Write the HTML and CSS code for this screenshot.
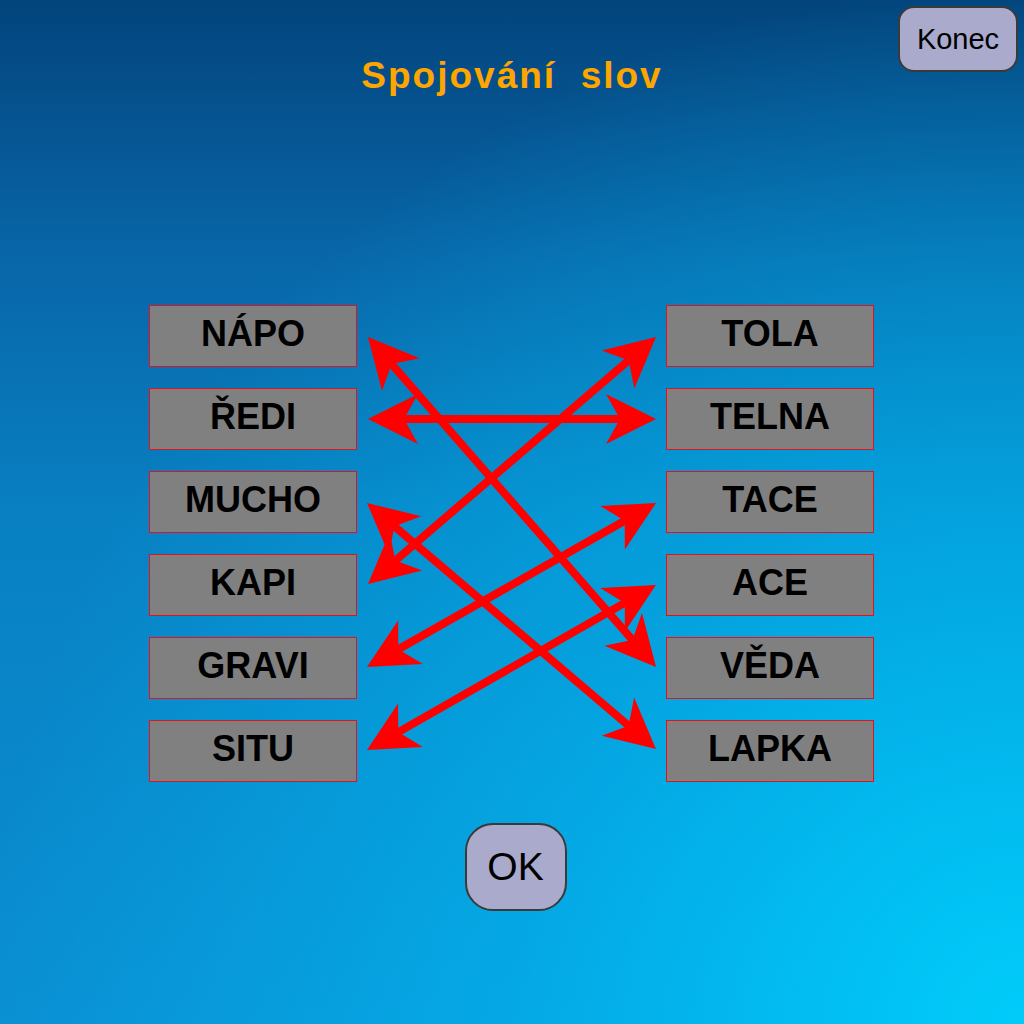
FILE: index.html
```html
<!DOCTYPE html>
<html lang="cs">
<head>
<meta charset="utf-8">
<title>Spojování slov</title>
<link rel="stylesheet" href="styles.css">
</head>
<body>
<div class="page">
  <header class="top">
    <div></div>
    <h1 class="title">Spojování&nbsp; slov</h1>
    <div class="top-right"><button class="btn btn-konec">Konec</button></div>
  </header>

  <main class="board">
    <div class="col">
      <div class="word">NÁPO</div>
      <div class="word">ŘEDI</div>
      <div class="word">MUCHO</div>
      <div class="word">KAPI</div>
      <div class="word">GRAVI</div>
      <div class="word">SITU</div>
    </div>
    <div class="col">
      <div class="word">TOLA</div>
      <div class="word">TELNA</div>
      <div class="word">TACE</div>
      <div class="word">ACE</div>
      <div class="word">VĚDA</div>
      <div class="word">LAPKA</div>
    </div>
  </main>

  <div class="actions"><button class="btn btn-ok">OK</button></div>

  <svg class="links" width="1024" height="1024" viewBox="0 0 1024 1024" aria-hidden="true">
    <defs>
      <marker id="ah" markerUnits="userSpaceOnUse" markerWidth="60" markerHeight="60"
              viewBox="-55 -30 60 60" refX="-32" refY="0" orient="auto-start-reverse" overflow="visible">
        <path d="M0,0 L-50,-25 L-36,0 L-50,25 Z" fill="#ff0000"/>
      </marker>
    </defs>
    <g stroke="#ff0000" stroke-width="8" fill="none" marker-start="url(#ah)" marker-end="url(#ah)">
      <line x1="389" y1="361.1" x2="635" y2="642.9"/>
      <line x1="400" y1="419" x2="624" y2="419"/>
      <line x1="392.3" y1="563.2" x2="631.7" y2="357.8"/>
      <line x1="391.4" y1="523.7" x2="631.6" y2="728.3"/>
      <line x1="394.8" y1="651.2" x2="628.2" y2="518.8"/>
      <line x1="394.8" y1="734.1" x2="628.2" y2="600.9"/>
    </g>
  </svg>
</div>
</body>
</html>
```

FILE: styles.css
```css
* { box-sizing: border-box; }

html, body {
  margin: 0;
  padding: 0;
}

body {
  font-family: "Liberation Sans", Arial, sans-serif;
}

.page {
  position: relative;
  width: 1024px;
  height: 1024px;
  overflow: hidden;
  display: flex;
  flex-direction: column;
  background:
    radial-gradient(ellipse at 100% 100%, #00ccfa 0%, rgba(0, 190, 245, 0.55) 35%, rgba(0, 180, 240, 0) 72%),
    linear-gradient(to bottom, #03447c 0%, #0866a8 25%, #0880c2 50%, #0a8fd3 100%);
}

.top {
  display: grid;
  grid-template-columns: 1fr auto 1fr;
  padding: 6px 6px 0 6px;
  height: 71px;
}

.title {
  margin: 50px 0 0 0;
  font-size: 37px;
  line-height: 40px;
  font-weight: bold;
  color: #ffa500;
  letter-spacing: 2px;
  white-space: nowrap;
  align-self: start;
}

.top-right {
  display: flex;
  justify-content: flex-end;
  align-items: flex-start;
}

.btn {
  font-family: "Liberation Sans", Arial, sans-serif;
  background: #aaaacc;
  color: #000;
  border: 2px solid #3a3a3a;
  padding: 0;
  cursor: pointer;
}

.btn-konec {
  width: 120px;
  height: 66px;
  border-radius: 16px;
  font-size: 29px;
}

.board {
  margin-top: 234px;
  display: flex;
  justify-content: center;
  gap: 309px;
  padding-right: 1px;
}

.col {
  display: flex;
  flex-direction: column;
  gap: 21px;
}

.word {
  width: 208px;
  height: 62px;
  background: #808080;
  border: 1px solid #e8101a;
  display: flex;
  align-items: center;
  justify-content: center;
  padding-bottom: 4px;
  font-size: 36px;
  font-weight: bold;
  color: #000;
}

.actions {
  display: flex;
  justify-content: center;
  margin-top: 41px;
  padding-left: 7px;
}

.btn-ok {
  width: 102px;
  height: 88px;
  border-radius: 28px;
  font-size: 39px;
}

.links {
  position: absolute;
  left: 0;
  top: 0;
  pointer-events: none;
}
```
